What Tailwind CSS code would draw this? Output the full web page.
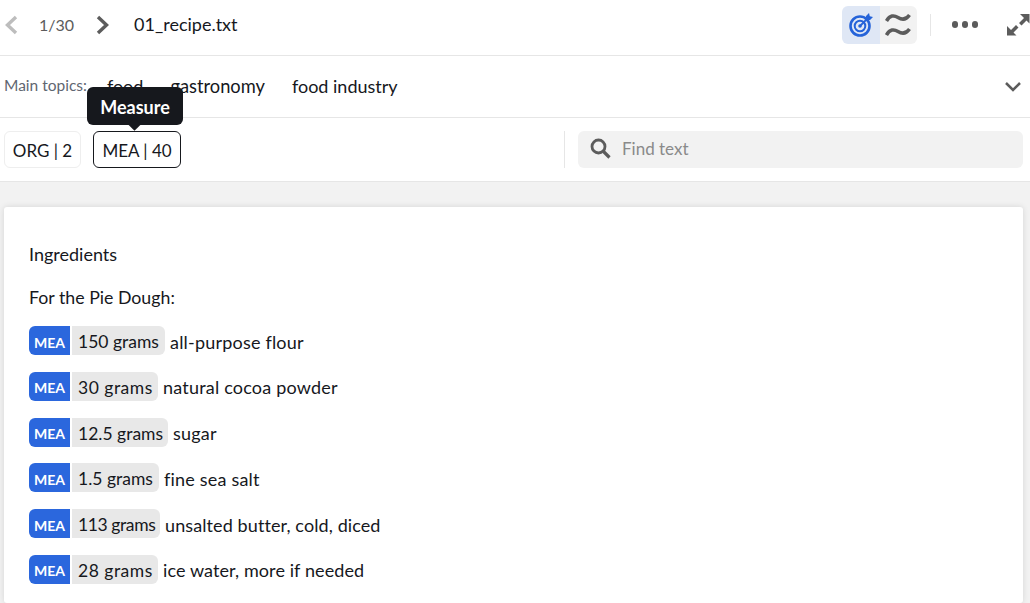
<!DOCTYPE html>
<html lang="en">
<head>
    <meta charset="UTF-8">
    <meta name="viewport" content="width=device-width, initial-scale=1.0">
    <title>01_recipe.txt</title>
    <script src="https://cdn.jsdelivr.net/npm/@tailwindcss/browser@4"></script>
</head>
<body class="h-[603px] overflow-hidden bg-[#f2f2f2] font-['Lato',sans-serif] text-[#16181d]">
    <!-- file nav -->
    <header class="h-[56px] bg-white border-b border-[#e6e6e6] flex items-center pl-[4px] pb-[6px]">
        <svg class="w-[15px] h-[20px]" viewBox="0 0 15 20" fill="none" stroke="#bdbdbd" stroke-width="3.400"><path d="M12 2 3.500 10 12 18"/></svg>
        <span class="ml-[20px] text-[16px] text-[#5c5c5c]">1/30</span>
        <svg class="ml-[21px] w-[15px] h-[20px]" viewBox="0 0 15 20" fill="none" stroke="#5c5c5c" stroke-width="3.400"><path d="M3 2 11.500 10 3 18"/></svg>
        <span class="ml-[24px] text-[18px]">01_recipe.txt</span>
        <div class="ml-auto flex items-center">
            <div class="flex h-[38px] w-[75px] rounded-[6px] overflow-hidden">
                <div class="w-[38px] bg-[#dfe7f5] flex items-center justify-center">
                    <svg class="w-[24px] h-[24px]" viewBox="0 0 24 24" fill="none" stroke="#2563d9">
                        <circle cx="11" cy="13" r="9.500" stroke-width="2.600"/>
                        <circle cx="11" cy="13" r="5.300" stroke-width="2"/>
                        <circle cx="11" cy="13" r="1.800" fill="#2563d9" stroke="none"/>
                        <path d="M11 13 20 4" stroke-width="1.800"/>
                        <path d="M17 3 20 0l.8 3.200L24 4l-3 3h-4z" fill="#2563d9" stroke="none"/>
                    </svg>
                </div>
                <div class="flex-1 bg-[#f2f2f2] flex items-center justify-center">
                    <svg class="w-[26px] h-[26px]" viewBox="0 0 26 26" fill="none" stroke="#5c5c5c" stroke-width="3.500"><path d="M1.500 9C5 3 9 3 13 5.500S21 8 24.500 3"/><path d="M1.500 23C5 17 9 17 13 19.500S21 22 24.500 17"/></svg>
                </div>
            </div>
            <div class="ml-[13px] w-px h-[22px] bg-[#e6e6e6]"></div>
            <div class="ml-[21px] flex gap-[3.500px]">
                <span class="w-[6.500px] h-[6.500px] rounded-full bg-[#5c5c5c]"></span>
                <span class="w-[6.500px] h-[6.500px] rounded-full bg-[#5c5c5c]"></span>
                <span class="w-[6.500px] h-[6.500px] rounded-full bg-[#5c5c5c]"></span>
            </div>
            <svg class="ml-[28px] w-[24px] h-[24px]" viewBox="0 0 24 24" fill="#5c5c5c">
                <path d="M14 1h9.500v9.500l-3-3-5 5-2.500-2.500 5-5z"/>
                <path d="M1 13v9.500h9.500l-3-3 5-5-2.500-2.500-5 5z"/>
            </svg>
        </div>
    </header>

    <!-- topics -->
    <section class="h-[62px] bg-white border-b border-[#e6e6e6] flex items-center pl-[4px] pr-[8px]">
        <span class="text-[15.500px] text-[#5f6671] pb-[2px]">Main topics:</span>
        <span class="ml-[20px] text-[18px]">food</span>
        <span class="ml-[27px] text-[18.300px]">gastronomy</span>
        <span class="ml-[27px] text-[18px]">food industry</span>
        <svg class="ml-auto w-[18px] h-[12px]" viewBox="0 0 18 12" fill="none" stroke="#5c5c5c" stroke-width="2.500"><path d="m2 2 7 7 7-7"/></svg>
    </section>

    <!-- entity filters and search -->
    <section class="relative h-[64px] bg-white border-b border-[#e6e6e6] flex items-center pl-[4px] pr-[7px]">
        <button class="h-[37px] w-[77px] rounded-[6px] border border-[#eeeeee] text-[17px] pt-[2px] text-center">ORG | 2</button>
        <button class="ml-[12px] h-[37px] w-[88px] rounded-[6px] border border-[#16181d] text-[17px] pt-[2px] text-center">MEA | 40</button>
        <div class="absolute left-[87px] top-[-31px] w-[96px] h-[38px] rounded-[6px] bg-[#16181d] text-white text-[18px] font-bold pt-[2px] flex items-center justify-center">
            Measure
            <span class="absolute left-[43px] bottom-[-4px] w-[9px] h-[9px] rotate-45 bg-[#16181d]"></span>
        </div>
        <div class="ml-auto w-px h-[37px] bg-[#e6e6e6]"></div>
        <div class="ml-[13px] w-[445px] h-[37px] rounded-[6px] bg-[#f2f2f2] flex items-center pl-[12px] pb-[2px]">
            <svg class="w-[21px] h-[21px]" viewBox="0 0 21 21" fill="none" stroke="#5c5c5c"><circle cx="8.500" cy="8.500" r="6.500" stroke-width="2.800"/><path d="m13.500 13.500 6 6" stroke-width="3.200"/></svg>
            <span class="ml-[11px] text-[17px] text-[#8a8a8a]">Find text</span>
        </div>
    </section>

    <!-- document -->
    <main class="pt-[25px] pl-[4px] pr-[7px]">
        <article class="h-[396px] bg-white rounded-[3px] shadow-[0_0_6px_rgba(0,0,0,0.12)] pl-[25px] pt-[36px] text-[18px]">
            <p class="h-[22px] leading-[22px]">Ingredients</p>
            <p class="mt-[21px] h-[22px] leading-[22px] text-[17.750px]">For the Pie Dough:</p>
            <div class="mt-[18.300px] flex flex-col gap-[16.700px]">
                <div class="flex items-center h-[29px]">
                    <span class="h-[29px] w-[41px] bg-[#2b67dd] rounded-l-[6px] text-white text-[14px] font-bold pt-[3px] flex items-center justify-center">MEA</span>
                    <span class="ml-[2px] h-[29px] w-[93px] pl-[6px] bg-[#e8e8e8] rounded-r-[6px] text-[17.500px] pt-[3px] flex items-center">150 grams</span>
                    <span class="ml-[5px] pt-[3px] tracking-[0.2px]">all-purpose flour</span>
                </div>
                <div class="flex items-center h-[29px]">
                    <span class="h-[29px] w-[41px] bg-[#2b67dd] rounded-l-[6px] text-white text-[14px] font-bold pt-[3px] flex items-center justify-center">MEA</span>
                    <span class="ml-[2px] h-[29px] w-[86px] pl-[6px] bg-[#e8e8e8] rounded-r-[6px] text-[17.500px] tracking-[0.5px] pt-[3px] flex items-center">30 grams</span>
                    <span class="ml-[5px] pt-[3px] tracking-[0.2px]">natural cocoa powder</span>
                </div>
                <div class="flex items-center h-[29px]">
                    <span class="h-[29px] w-[41px] bg-[#2b67dd] rounded-l-[6px] text-white text-[14px] font-bold pt-[3px] flex items-center justify-center">MEA</span>
                    <span class="ml-[2px] h-[29px] w-[96px] pl-[6px] bg-[#e8e8e8] rounded-r-[6px] text-[17.500px] pt-[3px] flex items-center">12.5 grams</span>
                    <span class="ml-[5px] pt-[3px] tracking-[0.2px]">sugar</span>
                </div>
                <div class="flex items-center h-[29px]">
                    <span class="h-[29px] w-[41px] bg-[#2b67dd] rounded-l-[6px] text-white text-[14px] font-bold pt-[3px] flex items-center justify-center">MEA</span>
                    <span class="ml-[2px] h-[29px] w-[87px] pl-[6px] bg-[#e8e8e8] rounded-r-[6px] text-[17.500px] pt-[3px] flex items-center">1.5 grams</span>
                    <span class="ml-[5px] pt-[3px] tracking-[0.2px]">fine sea salt</span>
                </div>
                <div class="flex items-center h-[29px]">
                    <span class="h-[29px] w-[41px] bg-[#2b67dd] rounded-l-[6px] text-white text-[14px] font-bold pt-[3px] flex items-center justify-center">MEA</span>
                    <span class="ml-[2px] h-[29px] w-[88px] pl-[6px] bg-[#e8e8e8] rounded-r-[6px] text-[17.500px] tracking-[-0.4px] pt-[3px] flex items-center">113 grams</span>
                    <span class="ml-[5px] pt-[3px] tracking-[0.1px]">unsalted butter, cold, diced</span>
                </div>
                <div class="flex items-center h-[29px]">
                    <span class="h-[29px] w-[41px] bg-[#2b67dd] rounded-l-[6px] text-white text-[14px] font-bold pt-[3px] flex items-center justify-center">MEA</span>
                    <span class="ml-[2px] h-[29px] w-[86px] pl-[6px] bg-[#e8e8e8] rounded-r-[6px] text-[17.500px] tracking-[0.5px] pt-[3px] flex items-center">28 grams</span>
                    <span class="ml-[5px] pt-[3px] tracking-[0.1px]">ice water, more if needed</span>
                </div>
            </div>
        </article>
    </main>
</body>
</html>
